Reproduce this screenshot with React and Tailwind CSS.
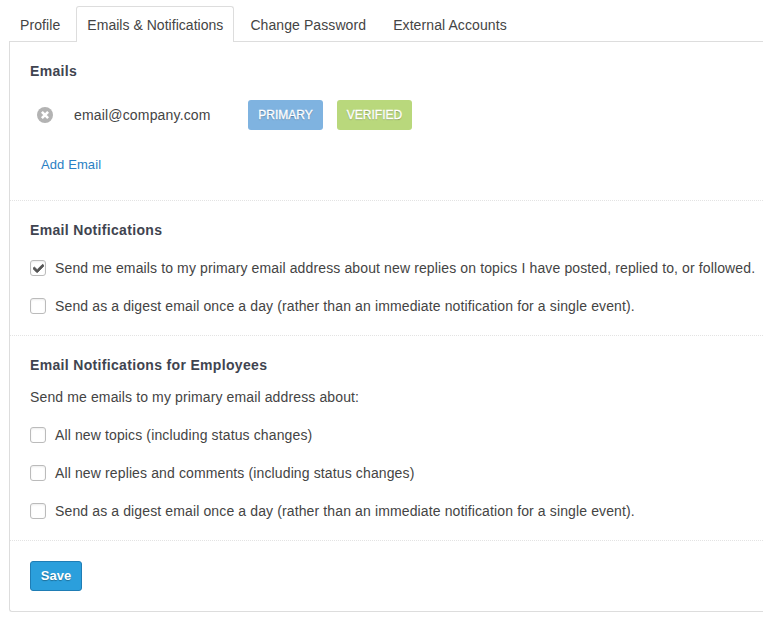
import React from "react";
import { FaCheck } from "react-icons/fa";

const tabs = ["Profile", "Emails & Notifications", "Change Password", "External Accounts"];

const CheckRow = ({ checked, children }) => (
  <label className="flex items-center h-5 whitespace-nowrap tracking-[0.126px]">
    <span className="flex shrink-0 items-center justify-center w-4 h-4 mr-[9px] bg-white border border-[#bbb] rounded-[3px] text-[#555] shadow-[inset_0_1px_2px_rgba(0,0,0,0.08)]">
      {checked ? <FaCheck className="w-[11px] h-[11px]" stroke="currentColor" strokeWidth={40} /> : ""}
    </span>
    {children}
  </label>
);

const Heading = ({ children }) => (
  <h3 className="text-sm font-bold leading-5 tracking-[0.33px] text-[#3f4450]">{children}</h3>
);

export default function App() {
  return (
    <div className="h-[620px] w-[763px] overflow-hidden bg-white pt-1.5 pl-[9px] text-sm leading-5 text-[#444] font-['Liberation_Sans',Arial,sans-serif]">
      <ul className="flex h-[36px] -mb-px relative">
        {tabs.map((tab, i) => (
          <li
            key={tab}
            className={`mr-[5px] px-[10px] pt-[8px] border border-b-0 rounded-t-[3px] ${
              i === 1
                ? "border-[#ddd] bg-white h-[36px] tracking-[0.03px]"
                : "border-transparent h-[35px] tracking-[0.09px]"
            }`}
          >
            {tab}
          </li>
        ))}
      </ul>
      <div className="border border-r-0 border-[#ddd] rounded-bl-[3px] h-[571px]">
        <section className="h-[159px] px-5 pt-[19px] border-b border-dotted border-[#e3e3e3]">
          <Heading>Emails</Heading>
          <div className="flex items-center h-[30px] mt-[19px] pl-[7px]">
            <svg viewBox="0 0 16 16" className="w-4 h-4">
              <circle cx="8" cy="8" r="8" fill="#b3b3b3" />
              <path d="M4.9 4.9l6.2 6.2M11.1 4.9l-6.2 6.2" stroke="#fff" strokeWidth="2.6" />
            </svg>
            <span className="ml-[21px] w-[174px] tracking-[0.17px]">email@company.com</span>
            <span className="flex items-center justify-center w-[75px] h-[30px] rounded-[3px] bg-[#7fb3e0] text-white text-xs [-webkit-text-stroke:0.3px_#fff] [text-shadow:0_1px_1px_rgba(0,0,0,0.3)]">
              PRIMARY
            </span>
            <span className="flex items-center justify-center w-[75px] h-[30px] ml-[14px] rounded-[3px] bg-[#b9d87c] text-white text-xs [-webkit-text-stroke:0.3px_#fff] [text-shadow:0_1px_1px_rgba(0,0,0,0.3)]">
              VERIFIED
            </span>
          </div>
          <a className="block mt-[25px] ml-[11px] text-[13px] leading-5 tracking-[0.1px] text-[#2a80c4]">Add Email</a>
        </section>
        <section className="h-[135px] px-5 pt-[19px] border-b border-dotted border-[#e3e3e3]">
          <Heading>Email Notifications</Heading>
          <div className="flex flex-col gap-[18px] mt-[18px]">
            <CheckRow checked>
              Send me emails to my primary email address about new replies on topics I have posted, replied to, or followed.
            </CheckRow>
            <CheckRow>
              Send as a digest email once a day (rather than an immediate notification for a single event).
            </CheckRow>
          </div>
        </section>
        <section className="h-[205px] px-5 pt-[19px] border-b border-dotted border-[#e3e3e3]">
          <Heading>Email Notifications for Employees</Heading>
          <p className="mt-3 tracking-[0.126px]">Send me emails to my primary email address about:</p>
          <div className="flex flex-col gap-[18px] mt-[18px]">
            <CheckRow>All new topics (including status changes)</CheckRow>
            <CheckRow>All new replies and comments (including status changes)</CheckRow>
            <CheckRow>
              Send as a digest email once a day (rather than an immediate notification for a single event).
            </CheckRow>
          </div>
        </section>
        <section className="px-5 pt-5">
          <button className="w-[52px] h-[30px] rounded-[3px] border border-[#1f7db5] bg-[#2b9fdc] text-white text-[13px] font-bold [text-shadow:0_1px_1px_rgba(0,0,0,0.3)]">
            Save
          </button>
        </section>
      </div>
    </div>
  );
}
